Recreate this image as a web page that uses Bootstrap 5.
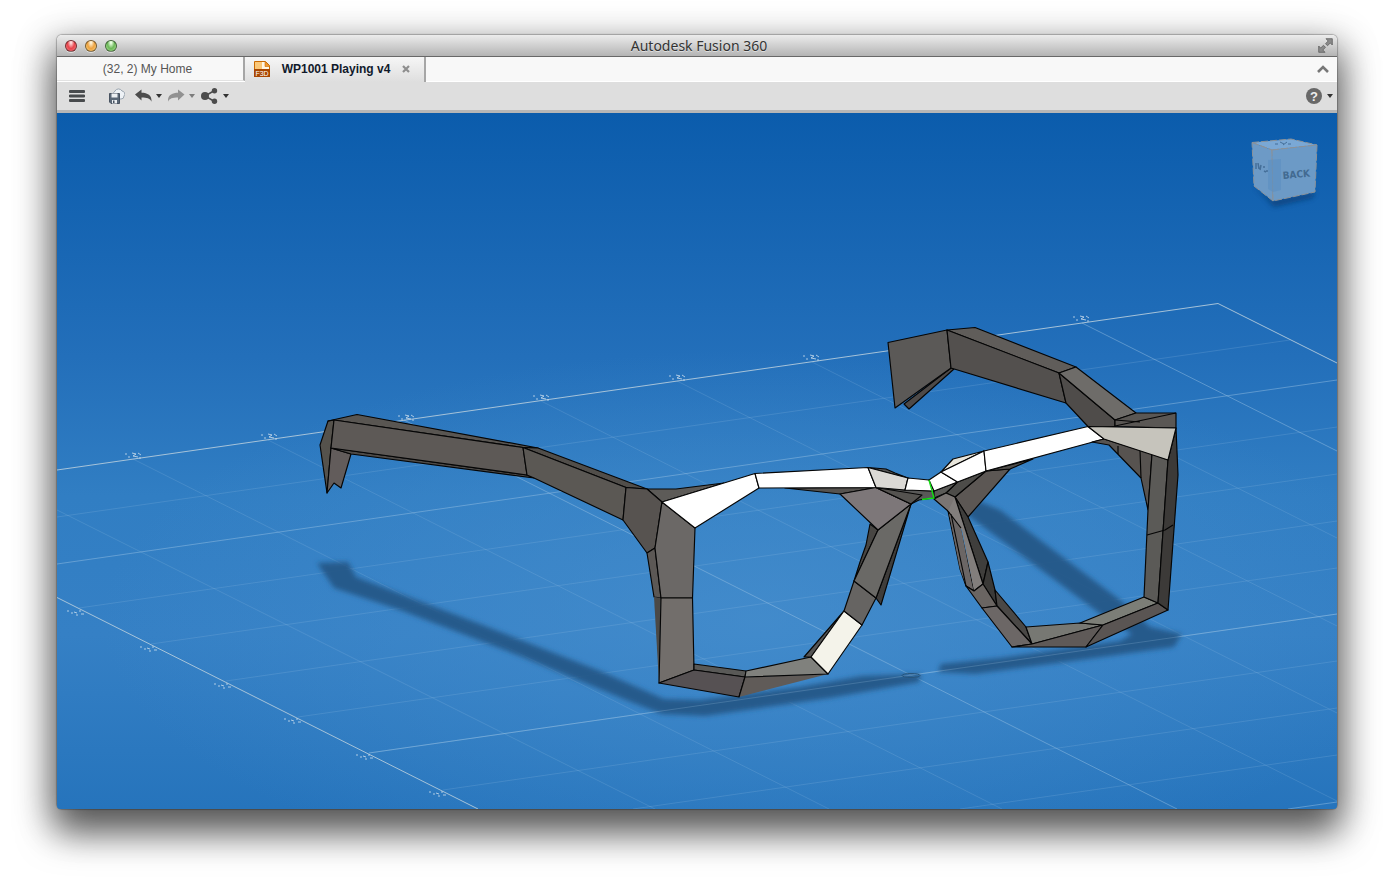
<!DOCTYPE html>
<html lang="en">
<head>
<meta charset="utf-8">
<meta name="viewport" content="width=device-width, initial-scale=1">
<title>Autodesk Fusion 360</title>
<link href="https://cdn.jsdelivr.net/npm/bootstrap@5.3.0/dist/css/bootstrap.min.css" rel="stylesheet">
<style>
body{background:#fff;font-family:"Liberation Sans",Arial,sans-serif;font-size:12px;padding:35px 57px 79px}
button{background:none;border:0;padding:0;color:inherit}
svg{display:block}
.app-window{border-radius:5px;box-shadow:0 0 1px 1px rgba(0,0,0,.25),0 22px 36px 2px rgba(0,0,0,.55),0 10px 36px 6px rgba(0,0,0,.28)}
.title-bar{height:22px;padding:0 4px 0 8px;background:linear-gradient(#ececec,#d0d0d0 50%,#b4b4b4);border-bottom:1px solid #686868;border-radius:5px 5px 0 0}
.title-bar h1{font:14px/20px "Noto Sans","Open Sans",sans-serif;color:#333;text-shadow:0 1px 0 rgba(255,255,255,.5)}
.traffic{width:12px;height:12px;border-radius:50%;border:1px solid rgba(0,0,0,.5);box-shadow:0 1px 0 rgba(255,255,255,.5)}
.t-close{background:radial-gradient(ellipse at 50% 15%,#ffd8d8 8%,#e8444b 50%,#f6868a)}
.t-min{background:radial-gradient(ellipse at 50% 15%,#fff0d0 8%,#eda23f 50%,#ffdc8c)}
.t-zoom{background:radial-gradient(ellipse at 50% 15%,#e8ffe0 8%,#6cb858 50%,#b5eda0)}
.side{width:64px}
.doc-tabs{height:25px;background:#f8f8f8;border-bottom:1px solid #fff}
.doc-tab{height:24px;border-right:2px solid #a6a6a6;color:#555}
.tab-home{width:188px;padding-right:5px;border-bottom:1px solid #e2e2e2;line-height:24px}
.tab-doc{width:181px;height:25px;background:linear-gradient(#f6f6f6,#dedede);padding:0 14px 2px 9px;color:#111a2b}
.tool-bar{height:31px;padding:0 4px 0 12px;background:#dedede;border-bottom:3px solid #b6b6b6;color:#4a4a4a}
.tool-group{gap:5px;margin-left:10px}
.save-tool{margin-left:24px}
.viewport{min-height:400px;border-radius:0 0 4px 4px;background:#2b79c1}
.scene{position:absolute;inset:0;width:100%;height:100%}
.view-cube{top:21px;right:11px}
.view-cube text{font:700 12px "DejaVu Sans Condensed","Liberation Sans Narrow",sans-serif}
</style>
</head>
<body class="d-flex flex-column min-vh-100">
<div class="app-window d-flex flex-column flex-fill">
  <header class="title-bar d-flex align-items-center justify-content-between">
    <div class="side d-flex gap-2">
      <button class="traffic t-close" aria-label="Close window"></button>
      <button class="traffic t-min" aria-label="Minimize window"></button>
      <button class="traffic t-zoom" aria-label="Zoom window"></button>
    </div>
    <h1 class="m-0">Autodesk Fusion 360</h1>
    <div class="side d-flex justify-content-end">
      <button aria-label="Full screen"><svg width="15" height="15" viewBox="0 0 15 15" fill="#8a8a8a" stroke="#606060" stroke-width=".8"><path d="M8 .7h6.300v6.300l-2-2-2.800 2.700-2-2L10.200 3zM.7 8l2 2 2.800-2.700 2 2L4.800 12l2.200 2.300H.7z"/></svg></button>
    </div>
  </header>

  <nav class="doc-tabs d-flex justify-content-between" aria-label="Documents">
    <div class="d-flex">
      <button class="doc-tab tab-home text-center">(32, 2) My Home</button>
      <div class="doc-tab tab-doc d-flex align-items-center">
        <svg width="16" height="16" viewBox="0 0 16 16"><path d="M.5.5h11l4 4v11H.5z" fill="#fff6e4" stroke="#c96a00"/><path d="M1 1h7v8H1z" fill="#fbc878"/><path d="M11 .5v5h5z" fill="#f29a2e" stroke="#c96a00" stroke-width=".6"/><path d="M0 8h16v8H0z" fill="#a94700"/><text x="8" y="14.500" font-size="7" fill="#fff" text-anchor="middle" font-family="Liberation Sans">F3D</text></svg>
        <button class="fw-bold ms-auto me-auto">WP1001 Playing v4</button>
        <button aria-label="Close tab"><svg width="8" height="8" viewBox="0 0 8 8"><path d="M1 1l6 6M7 1L1 7" stroke="#8e8e8e" stroke-width="2.200"/></svg></button>
      </div>
    </div>
    <button class="px-2" aria-label="Collapse toolbar"><svg width="12" height="8" viewBox="0 0 12 8"><path d="M1 7l5-5 5 5" fill="none" stroke="#777" stroke-width="2.600"/></svg></button>
  </nav>

  <div class="tool-bar d-flex align-items-center" role="toolbar" aria-label="Main">
    <button aria-label="Menu"><svg width="16" height="14" viewBox="0 0 16 14"><path d="M1 2.500h14M1 7h14M1 11.500h14" stroke="#484b4d" stroke-width="2.800" stroke-linecap="round"/></svg></button>
    <button class="save-tool" aria-label="Save"><svg width="16" height="17" viewBox="0 0 16 17"><path d="M5 7a3 3 0 0 1 1-4 4 4 0 0 1 7 0 3 3 0 0 1 2 5 3 3 0 0 1-3 3H6z" fill="#eef2f6" stroke="#9aa5b0"/><path d="M.5 5.500h10v10H2l-1.500-1.500z" fill="#5b6877" stroke="#485361"/><path d="M2.500 5.500h6v4h-6zM3 12h5v3.500H3z" fill="#edf0f3"/><path d="M4 12.500h1.500V15H4z" fill="#485361"/></svg></button>
    <div class="tool-group d-flex align-items-center">
      <button aria-label="Undo"><svg width="28" height="16" viewBox="0 0 28 16"><path d="M0 6.500L6.500 1.500v3.200c6 0 10.500 2.500 10 9-1.500-3.400-4.500-4.200-10-4.200v3z" fill="#4c4c4c"/><path d="M21 6h6l-3 4z" fill="#333"/></svg></button>
      <button aria-label="Redo"><svg width="28" height="16" viewBox="0 0 28 16"><path d="M16.500 6.500L10 1.500v3.200c-6 0-10.500 2.500-10 9 1.500-3.400 4.500-4.200 10-4.200v3z" fill="#919191"/><path d="M21 6h6l-3 4z" fill="#7d7d7d"/></svg></button>
      <button aria-label="Share"><svg width="28" height="16" viewBox="0 0 28 16"><path d="M13.500 2.500L4 8l9.500 5.500" fill="none" stroke="#4c4c4c" stroke-width="1.500"/><g fill="#4c4c4c"><circle cx="4" cy="8" r="4"/><circle cx="13.500" cy="2.700" r="2.700"/><circle cx="13.500" cy="13.300" r="2.700"/></g><path d="M22 6h6l-3 4z" fill="#333"/></svg></button>
    </div>
    <button class="ms-auto" aria-label="Help"><svg width="28" height="16" viewBox="0 0 28 16"><circle cx="9" cy="8" r="8" fill="#686868"/><text x="9" y="12.500" text-anchor="middle" font-size="13" font-weight="700" font-family="Liberation Sans" fill="#eee">?</text><path d="M22 6h6l-3 4z" fill="#333"/></svg></button>
  </div>

  <main class="viewport position-relative flex-fill overflow-hidden">
    <svg class="scene" viewBox="57 113 1280 696" preserveAspectRatio="xMidYMid slice" role="img" aria-label="Eyeglass frame model on a grid">
      <defs>
        <linearGradient id="sky" x1="0" y1="0" x2="0" y2="1"><stop offset="0" stop-color="#0b5cac"/><stop offset=".35" stop-color="#236fba"/><stop offset=".55" stop-color="#317ec3"/><stop offset=".75" stop-color="#3580c5"/><stop offset="1" stop-color="#2674bc"/></linearGradient>
        <radialGradient id="glow" gradientUnits="userSpaceOnUse" cx="0" cy="0" r="1" gradientTransform="translate(760 620) scale(660 270)"><stop offset="0" stop-color="#468ecd" stop-opacity=".75"/><stop offset="1" stop-color="#468ecd" stop-opacity="0"/></radialGradient>
        <filter id="soft" x="-10%" y="-30%" width="120%" height="160%"><feGaussianBlur stdDeviation="2.800"/></filter>
        <path id="tickBack" d="M-8-5h2M-5-2h2M-1-6l4 1-3 2 5 1M5-6l3 2M6-1h2" />
        <path id="tickFront" d="M-13 3h2M-9 5h2M-6 4l3 1M-4 7h2M-1 3h2M1 6h3" />
      </defs>
      <path fill="url(#sky)" d="M57 113h1280v696H57z"/>
      <path fill="url(#glow)" d="M57 113h1280v696H57z"/>
      <!-- grid -->
      <g fill="none" stroke="#9cc4e4">
        <path stroke-opacity=".2" d="M57 517L1290 340M79 608L1337 427M151 644L1337 474M226 681L1337 521M298 717L1337 568M443 790L1337 661M633 809L1337 708M960 809L1337 755M57 510L655 809M133 459L829 809M268 440L1002 809M541 401L1337 801M677 381L1337 713M812 362L1337 626M947 342L1337 538"/>
        <path stroke-opacity=".46" d="M57 564L1337 380M369 753L1337 614M1288 809L1337 802M404 420L1177 809M1082 323L1337 451"/>
        <path stroke="#b4cbdc" stroke-opacity=".9" d="M57 470L1218 303.500L1337 363M57 597.500L478 809"/>
      </g>
      <g fill="none" stroke="#cfe0ee" stroke-opacity=".8">
        <use href="#tickBack" x="133" y="459"/><use href="#tickBack" x="269" y="440"/><use href="#tickBack" x="406" y="421"/><use href="#tickBack" x="541" y="401"/><use href="#tickBack" x="677" y="381"/><use href="#tickBack" x="811" y="361"/><use href="#tickBack" x="1081" y="322"/>
        <use href="#tickFront" x="80" y="608"/><use href="#tickFront" x="153" y="644"/><use href="#tickFront" x="227" y="681"/><use href="#tickFront" x="297" y="716"/><use href="#tickFront" x="369" y="752"/><use href="#tickFront" x="442" y="789"/>
      </g>
      <!-- cast shadow -->
      <g filter="url(#soft)" fill="#245685" fill-opacity=".92">
        <path d="M317 563L348 562L356 577L480 624L600 671L664 699L700 700L800 687L862 676L921 674L919 682L830 698L705 716L662 714L626 700L520 656L400 610L334 588Z"/>
        <path d="M941 664L1000 658L1120 641L1132 634L1106 618L966 514L974 499L1000 510L1120 600L1150 627L1182 634L1174 647L1080 660L975 674L938 672Z"/>
      </g>
      <path d="M369 753L1337 614" stroke="#9cc4e4" stroke-opacity=".22"/>
      <ellipse cx="911" cy="675.500" rx="9" ry="2" fill="none" stroke="#28557b"/>
      <!-- glasses frame -->
      <g stroke="#050505" stroke-width="1.150" stroke-linejoin="round">
        <path fill="#55524c" d="M320 445L328 421L334 420L331 448L327 493Z"/>
        <path fill="#625c5b" d="M331 448L351 454L341 488L334 483L327 493Z"/>
        <path fill="#4e4b48" d="M331 448L351 454L534 478L527 475Z"/>
        <path fill="#595652" d="M328 421L357 414.500L538 448L523 447.500L334 420Z"/>
        <path fill="#5d5956" d="M334 420L523 447.500L527 475L331 448Z"/>
        <path fill="#514e4a" d="M523 447.500L538 448L647 489L626 487.500Z"/>
        <path fill="#5b5854" d="M523 447.500L626 487.500L623 520L534 478L527 475Z"/>
        <path fill="#5d5b58" d="M647 489L676 489L724 483L662 502Z"/>
        <path fill="#575350" d="M626 487.500L647 489L662 502L655 548L647 553L623 520Z"/>
        <path fill="#5c5855" d="M655 548L647 553L654 597L661 598Z"/>
        <path fill="#4b4946" stroke="none" d="M654 597L661 598L659 683Z"/>
        <path fill="#6b6866" d="M662 502L695 528L692.500 598L661 598L655 548Z"/>
        <path fill="#726e6b" d="M661 598L692.500 598L694 670L659 683Z"/>
        <path fill="#595957" d="M694 664L746 671L745 677L694 670Z"/>
        <path fill="#565153" d="M659 683L694 670L745 677L739 697Z"/>
        <path fill="#605b58" stroke="none" d="M745 677L828 674L739 697Z"/>
        <path fill="none" d="M745 677L739 697"/>
        <path fill="#80817d" d="M746 671L811 657L828 674L745 677Z"/>
        <path fill="#555" d="M804 657L844 611L811 657Z"/>
        <path fill="#f4f3ea" d="M844 611L862 625L828 674L811 657Z"/>
        <path fill="#666462" d="M854 581L876 598L862 625L844 611Z"/>
        <path fill="#484643" d="M870 524L878 530L854 581L860 562L866 545Z"/>
        <path fill="#3f3d3b" d="M911 504L881 605L876 598Z"/>
        <path fill="#6a6966" d="M878 530L911 504L876 598L854 581Z"/>
        <path fill="#565350" d="M785 488L876 487.500L840 494Z"/>
        <path fill="#7d7779" d="M840 494L876 487.500L911 504L878 530Z"/>
        <path fill="#595958" d="M876 487.500L905 490L934 491L934 498L919 500L911 504Z"/>
        <path fill="#555350" d="M876 487.500L922 495L911 504Z"/>
        <path fill="#555" d="M868 467.500L886 469L895 473L908 478Z"/>
        <path fill="#fff" d="M662 502L755 473.500L759 488L695 528Z"/>
        <path fill="#fff" d="M755 473.500L868 467.500L876 487.500L759 488Z"/>
        <path fill="#dbd9d5" d="M868 467.500L908 478L905 490L876 487.500Z"/>
        <path fill="#fff" d="M908 478L929 480L934 491L905 490Z"/>
        <path fill="#5c5754" d="M986 471L1010 469L968 517L955 497Z"/>
        <path fill="#504e4b" d="M986 471L1033 459L1010 469Z"/>
        <path fill="#4d4c49" d="M957.500 482L986 471L955 497L946 493Z"/>
        <path fill="#5b5b58" d="M934 491L957.500 482L946 493L934 498Z"/>
        <path fill="#e8e6dc" d="M941 472L953 459L984 451Z"/>
        <path fill="#fff" d="M929 480L941 472L957.500 482L934 491Z"/>
        <path fill="#fff" d="M941 472L984 451L986 471L957.500 482Z"/>
        <path fill="#fff" d="M984 451L1088 426.500L1104 439L986 471Z"/>
        <path fill="#3f3e3c" d="M955 497L968 517L988 562L983 584Z"/>
        <path fill="#3a3937" d="M988 562L995 590L997 606L983 584Z"/>
        <path fill="#6b6665" d="M948 511L960 528L974 591L966 586L960 569Z"/>
        <path fill="#7a7573" d="M934 499L946 493L955 497L961 528L948 511Z"/>
        <path fill="#827e7c" stroke="none" d="M948 511L955 497L983 584L974 591L962 530Z"/>
        <path fill="#6b6665" stroke="none" d="M949 513L961 528L973 590L966 585L960 569Z"/>
        <path fill="none" d="M955 497L983 584L974 591L966 586M948 511L961 528M951 514L966 586"/>
        <path fill="#6a6562" d="M966 586L974 591L983 584L997 606L982 608Z"/>
        <path fill="#4a4846" d="M995 590L1026 627L1032 644L997 606Z"/>
        <path fill="#6c6766" d="M982 608L997 606L1032 644L1012 647Z"/>
        <path fill="#777873" d="M1026 627L1080 623L1103 625L1032 644Z"/>
        <path fill="#5f5a58" d="M1032 644L1103 625L1086 647L1012 647Z"/>
        <path fill="#7c7e77" d="M1080 623L1144 597L1158 603L1103 625Z"/>
        <path fill="#5a5553" d="M1103 625L1158 603L1168 610L1086 647Z"/>
        <path fill="#575350" d="M1092 442L1104 439L1152 454L1148 510L1141 478L1109 445Z"/>
        <path fill="none" d="M1140 450L1141 478M1118 446L1118 454"/>
        <path fill="#5b5a57" d="M1152 454L1168 460L1158 603L1144 597L1148 510Z"/>
        <path fill="#3c3a38" d="M1168 460L1176 428L1178 475L1168 610L1158 603Z"/>
        <path fill="none" d="M1147 535L1165 530L1173 525"/>
        <path fill="#4e4a48" d="M951 368L954 369L909 409L904 404Z"/>
        <path fill="#5b5957" d="M888 342.500L947 330L951 368L895 408Z"/>
        <path fill="#605d5a" d="M947 330L975 327.500L1076 367L1059 373Z"/>
        <path fill="#53504e" d="M947 330L1059 373L1066 403L951 368Z"/>
        <path fill="#4f4c4a" d="M1059 373L1115 420L1115 426.500L1088 426.500L1066 403Z"/>
        <path fill="#6e6c69" d="M1059 373L1076 367L1136 413L1115 420Z"/>
        <path fill="#5a5754" d="M1115 420L1136 413L1176 413L1176 428L1115 426.500Z"/>
        <path fill="none" d="M1115 426L1176 413M1115 420L1140 422"/>
        <path fill="#c6c4bc" d="M1088 426.500L1176 428L1168 460L1104 439Z"/>
        <path fill="none" stroke="#13e013" stroke-width="1.400" d="M929 480L934 498L922 499.500"/>
      </g>
    </svg>
    <button class="view-cube position-absolute" aria-label="View cube, back">
      <svg width="80" height="80" viewBox="0 0 80 80">
        <path d="M8 52L27 66L70 58L66 64L28 73Z" fill="#0a3f78" filter="url(#soft)" opacity=".8"/>
        <g stroke="#8c9298" stroke-width="1" stroke-dasharray="7 2">
          <path d="M6 8.500L45 5L71 11L26 16Z" fill="#7aa8d5"/>
          <path d="M6 8.500L26 16L27 67L8 52Z" fill="#6d9ac6"/>
          <path d="M26 16L71 11L69 58L27 67Z" fill="#6c9ac6"/>
        </g>
        <path d="M22 26L35 25V56L27 58L22 55Z" fill="#5c8fc2" opacity=".6"/>
        <text x="37" y="45" style="font-size:10px" fill="#426a91" transform="rotate(-5 37 45)">BACK</text>
        <path d="M29 10h3M34 8l4 2M37 11l4-3M42 10h3" stroke="#456f99"/>
        <path d="M10 29v6M12 29l1 6M15 31l-1 5M17 33h2M18 37l2 1M21 36v2" stroke="#456f99" fill="none" stroke-width="1.500"/>
      </svg>
    </button>
  </main>
</div>
<script src="https://cdn.jsdelivr.net/npm/bootstrap@5.3.0/dist/js/bootstrap.bundle.min.js"></script>
</body>
</html>
